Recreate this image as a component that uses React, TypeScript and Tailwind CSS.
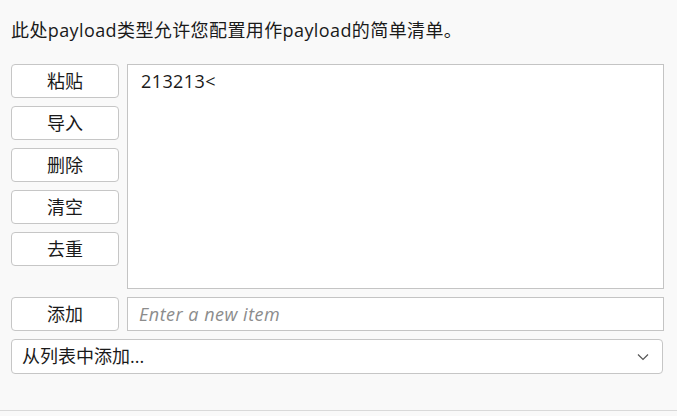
const font = "font-['Segoe_UI','Open_Sans','Noto_Sans_CJK_SC',sans-serif]";

const ActionButton = ({ label }: { label: string }) => (
  <button className="h-[34px] w-[108px] rounded-[4px] border border-[#c6c6c6] bg-white text-[18px] leading-[24px] text-[#1a1a1a]">
    {label}
  </button>
);

const App = () => {
  const actions = ["粘贴", "导入", "删除", "清空", "去重"];

  return (
    <div className={`h-[416px] w-[677px] bg-[#f9f9f9] ${font}`}>
      <div className="h-[411px] border-b border-[#d9d9d9] px-[11px] pt-[17px]">
        <p className="text-[18px] leading-[26px] tracking-[0.4px] text-[#1a1a1a]">
          此处payload类型允许您配置用作payload的简单清单。
        </p>

        <div className="mt-[21px] flex gap-[8px]">
          <div className="flex flex-col gap-[8px]">
            {actions.map((a) => (
              <ActionButton key={a} label={a} />
            ))}
          </div>
          <div className="h-[225px] w-[537px] border border-[#c4c4c4] bg-white px-[13px] pt-[3px] text-[18px] leading-[26px] tracking-[0.4px] text-[#1a1a1a]">
            213213&lt;
          </div>
        </div>

        <div className="mt-[8px] flex gap-[8px]">
          <ActionButton label="添加" />
          <input
            placeholder="Enter a new item"
            className="h-[34px] w-[537px] border border-[#c4c4c4] bg-white px-[11px] text-[18px] italic tracking-[0.5px] text-[#1a1a1a] outline-none placeholder:text-[#8c8c8c]"
          />
        </div>

        <div className="mt-[8px] flex h-[35px] w-[652px] items-center justify-between rounded-[4px] border border-[#c6c6c6] bg-white pl-[10px] pr-[12px] text-[18px] text-[#1a1a1a]">
          <span>从列表中添加...</span>
          <svg width="14" height="14" viewBox="0 0 14 14" fill="none" stroke="#555" strokeWidth="1.2">
            <path d="M2 4.5 L7 9.5 L12 4.5" />
          </svg>
        </div>
      </div>
    </div>
  );
};

export default App;
